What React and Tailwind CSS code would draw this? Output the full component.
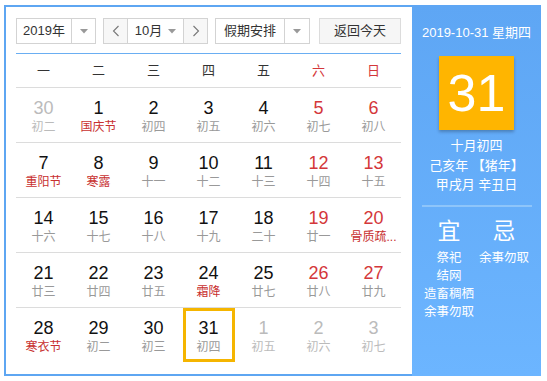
import React from 'react';

const weeks = ['一', '二', '三', '四', '五', '六', '日'];

// [day, lunar, flags] — o: other month, h: festival (red text), t: today
const rows = [
    [[30, '初二', 'o'], [1, '国庆节', 'h'], [2, '初四'], [3, '初五'], [4, '初六'], [5, '初七'], [6, '初八']],
    [[7, '重阳节', 'h'], [8, '寒露', 'h'], [9, '十一'], [10, '十二'], [11, '十三'], [12, '十四'], [13, '十五']],
    [[14, '十六'], [15, '十七'], [16, '十八'], [17, '十九'], [18, '二十'], [19, '廿一'], [20, '骨质疏...', 'h']],
    [[21, '廿三'], [22, '廿四'], [23, '廿五'], [24, '霜降', 'h'], [25, '廿七'], [26, '廿八'], [27, '廿九']],
    [[28, '寒衣节', 'h'], [29, '初二'], [30, '初三'], [31, '初四', 't'], [1, '初五', 'o'], [2, '初六', 'o'], [3, '初七', 'o']],
];

const Caret = () => (
    <svg width="8" height="5" viewBox="0 0 8 5">
        <path d="M0 0 L8 0 L4 4.5 Z" fill="#999" />
    </svg>
);

const Chevron = ({ dir }) => (
    <svg width="8" height="12" viewBox="0 0 8 12">
        <polyline
            points={dir === 'left' ? '6.5,1 1.5,6 6.5,11' : '1.5,1 6.5,6 1.5,11'}
            fill="none"
            stroke="#777"
            strokeWidth="1.1"
        />
    </svg>
);

const DayCell = ({ cell, col }) => {
    const [day, lunar, flag] = cell;
    const other = flag === 'o';
    const weekend = col >= 5;
    const numColor = other ? 'text-[#bbbbbb]' : weekend ? 'text-[#d4373a]' : 'text-[#111]';
    const lunarColor = other ? 'text-[#bbbbbb]' : flag === 'h' ? 'text-[#c8302f]' : 'text-[#999]';

    return (
        <div className="flex justify-center">
            <div
                className={`w-[52px] h-[54px] flex flex-col items-center ${
                    flag === 't' ? 'border-[3px] border-[#f5b500] pt-[6px]' : 'pt-[9px]'
                }`}
            >
                <span className={`text-[18px] leading-[22px] ${numColor}`}>{day}</span>
                <span className={`text-[12px] leading-[16px] whitespace-nowrap ${lunarColor}`}>{lunar}</span>
            </div>
        </div>
    );
};

export default function App() {
    return (
        <div
            className="w-[547px] h-[381px] bg-white pt-[5px] pl-[4px]"
            style={{ fontFamily: '"Liberation Sans", "Noto Sans CJK SC", sans-serif' }}
        >
            <div className="flex w-[537px] h-[371px] border-2 border-r-0 border-[#5ea6f2]">
                {/* left: calendar */}
                <div className="w-[406px] pt-[11px] pl-[10px]">
                    <div className="flex h-[26px] text-[13px] text-[#333]">
                        <div className="flex w-[80px] border border-[#d3d3d3]">
                            <div className="flex-1 flex items-center justify-center">2019年</div>
                            <div className="w-[24px] border-l border-[#d3d3d3] flex items-center justify-center">
                                <Caret />
                            </div>
                        </div>
                        <div className="flex w-[105px] ml-[7px] border border-[#d3d3d3]">
                            <div className="w-[23px] bg-[#f7f7f7] flex items-center justify-center">
                                <Chevron dir="left" />
                            </div>
                            <div className="flex-1 border-x border-[#d3d3d3] flex items-center justify-center gap-[6px]">
                                <span>10月</span>
                                <Caret />
                            </div>
                            <div className="w-[23px] bg-[#f7f7f7] flex items-center justify-center">
                                <Chevron dir="right" />
                            </div>
                        </div>
                        <div className="flex w-[95px] ml-[7px] border border-[#d3d3d3]">
                            <div className="flex-1 flex items-center justify-center">假期安排</div>
                            <div className="w-[25px] border-l border-[#d3d3d3] flex items-center justify-center">
                                <Caret />
                            </div>
                        </div>
                        <div className="w-[82px] ml-[9px] border border-[#dcdcdc] bg-[#f6f6f6] flex items-center justify-center">
                            返回今天
                        </div>
                    </div>

                    <div className="w-[385px] mt-[9px] border-t border-[#6aaef2]">
                        <div className="grid grid-cols-7 h-[34px] border-b border-[#dcdcdc] text-[13px]">
                            {weeks.map((w, i) => (
                                <div
                                    key={w}
                                    className={`flex items-center justify-center ${i >= 5 ? 'text-[#d4373a]' : 'text-[#333]'}`}
                                >
                                    {w}
                                </div>
                            ))}
                        </div>
                        {rows.map((row, r) => (
                            <div
                                key={r}
                                className={`grid grid-cols-7 h-[55px] ${r < rows.length - 1 ? 'border-b border-[#dcdcdc]' : ''}`}
                            >
                                {row.map((cell, c) => (
                                    <DayCell key={c} cell={cell} col={c} />
                                ))}
                            </div>
                        ))}
                    </div>
                </div>

                {/* right: detail panel */}
                <div className="flex-1 -mt-[2px] -mb-[2px] bg-linear-to-b from-[#5ea6f4] to-[#6cb5ff] text-white flex flex-col items-center pt-[19px]">
                    <div className="text-[13px] leading-[18px]">2019-10-31 星期四</div>
                    <div className="mt-[14px] w-[75px] h-[74px] bg-[#ffb500] shadow-[0_2px_3px_rgba(0,0,0,0.25)] flex items-center justify-center text-[52px] leading-none">
                        31
                    </div>
                    <div className="mt-[6px] text-[13px] leading-[19.5px] text-center">
                        <div>十月初四</div>
                        <div>己亥年 【猪年】</div>
                        <div>甲戌月 辛丑日</div>
                    </div>
                    <div className="mt-[10px] w-[110px] h-[2px] bg-[#8ec5fa]" />
                    <div className="w-[110px] grid grid-cols-2 mt-[10px]">
                        <div className="flex flex-col items-center">
                            <div className="text-[23px] leading-[28px]">宜</div>
                            <div className="mt-[4px] text-[12.5px] leading-[18px] text-center whitespace-nowrap">
                                <div>祭祀</div>
                                <div>结网</div>
                                <div>造畜稠栖</div>
                                <div>余事勿取</div>
                            </div>
                        </div>
                        <div className="flex flex-col items-center">
                            <div className="text-[23px] leading-[28px]">忌</div>
                            <div className="mt-[4px] text-[12.5px] leading-[18px] text-center whitespace-nowrap">
                                <div>余事勿取</div>
                            </div>
                        </div>
                    </div>
                </div>
            </div>
        </div>
    );
}
